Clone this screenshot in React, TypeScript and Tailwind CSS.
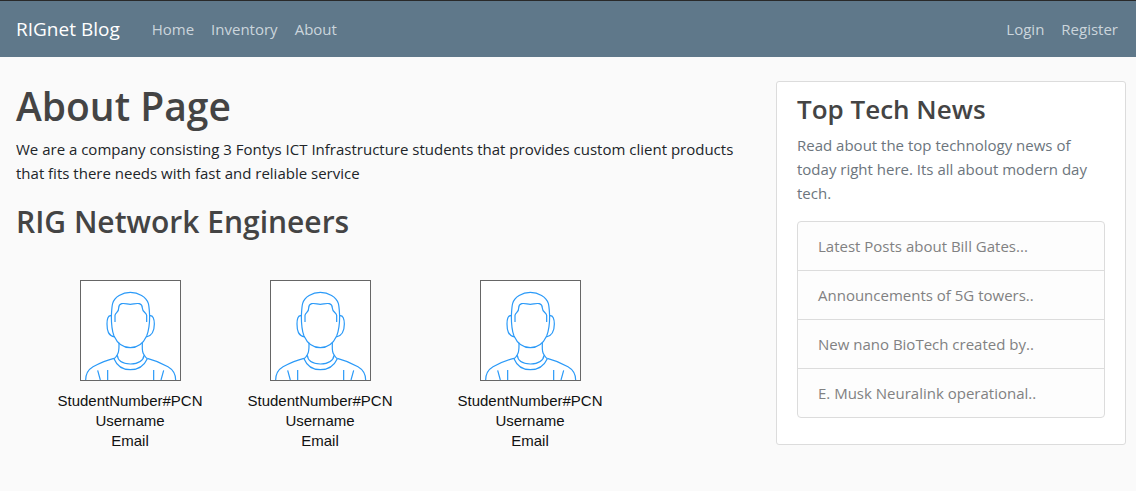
const primaryLinks = ["Home", "Inventory", "About"];
const accountLinks = ["Login", "Register"];
const engineers = [1, 2, 3];
const news = [
  "Latest Posts about Bill Gates...",
  "Announcements of 5G towers..",
  "New nano BioTech created by..",
  "E. Musk Neuralink operational..",
];

function NavLinks({ items }: { items: string[] }) {
  return (
    <ul className="flex gap-[17px]">
      {items.map((item) => (
        <li key={item}>
          <a href="#" className="text-[#cbd5dc] hover:text-white">
            {item}
          </a>
        </li>
      ))}
    </ul>
  );
}

function Avatar() {
  return (
    <svg viewBox="0 0 303 303" className="size-[101px]" fill="none" stroke="#2b9af8" strokeWidth="3.6" aria-hidden="true">
      <rect x="1.5" y="1.5" width="300" height="300" fill="#fff" stroke="#666" strokeWidth="3" />
      {/* head, hair and ears */}
      <path d="M94 109 C95 95 95 81 98 70 C103 51 127 37 151 37 C175 37 199 51 205 70 C208 81 208 95 209 109" />
      <path d="M94 106 C94 132 95 151 102 168 C112 190 130 203 151 203 C172 203 190 190 200 168 C207 151 209 132 209 106" />
      <path d="M105 126 L105 106 C106 98 117 96 116 84 C116 77 119 73 125 71 C134 69 142 73 151 73 C160 73 168 69 178 71 C184 73 187 77 187 84 C187 96 199 98 200 106 L200 126" />
      <path d="M94 107 C84 105 81 117 81 132 C81 153 85 167 104 171 M209 107 C219 105 223 117 223 132 C223 153 218 167 199 171" />
      {/* neck and collar */}
      <path d="M117 188 C117 205 118 216 112 224 C109 230 106 233 102 236 M187 188 C187 205 185 216 192 224 C195 230 198 233 202 236" />
      <path d="M112 226 C113 243 129 251 151 252 C173 251 190 243 192 226" />
      <path d="M102 236 C111 258 127 269 151 269 C175 269 192 258 202 236" />
      {/* shoulders and sleeves */}
      <path d="M102 235 C86 239 58 250 39 260 C22 270 17 284 17 300 M202 235 C218 239 246 250 264 260 C281 270 287 284 287 300" />
      <path d="M53 271 L61 300 M83 270 L83 300 M221 270 L221 300 M251 271 L243 300" />
    </svg>
  );
}

export default function App() {
  return (
    <div className="min-h-screen bg-[#fafafa] font-['Open_Sans','Noto_Sans',sans-serif] text-[15px] leading-6 text-[#212529]">
      <header className="border-t border-[#292929] bg-[#5f788a]">
        <nav className="flex min-h-14 flex-wrap items-center gap-x-8 pr-[18px] pl-4">
          <a href="#" className="text-[19px] text-white">
            RIGnet Blog
          </a>
          <div className="flex grow flex-wrap justify-between gap-x-4">
            <NavLinks items={primaryLinks} />
            <NavLinks items={accountLinks} />
          </div>
        </nav>
      </header>

      <div className="flex flex-col gap-8 pt-6 pr-[10px] pb-6 pl-4 md:flex-row md:items-start">
        <main className="min-w-0 grow basis-0">
          <h1 className="mb-[6px] text-[39px] leading-[50px] font-semibold text-[#444]">About Page</h1>
          <p className="mb-4">
            We are a company consisting 3 Fontys ICT Infrastructure students that provides custom client products that
            fits there needs with fast and reliable service
          </p>
          <h2 className="text-[30px] leading-[42px] font-semibold text-[#444]">RIG Network Engineers</h2>
          <div className="mt-[37px] flex flex-wrap gap-y-6 pl-[19px] lg:grid lg:grid-cols-[190px_190px_230px]">
            {engineers.map((id) => (
              <figure key={id} className="flex flex-col items-center gap-[10px]">
                <Avatar />
                <figcaption className="text-center font-['Liberation_Sans',sans-serif] leading-5 text-[#111]">
                  <div>StudentNumber#PCN</div>
                  <div>Username</div>
                  <div>Email</div>
                </figcaption>
              </figure>
            ))}
          </div>
        </main>

        <aside className="rounded-[3px] border border-[#dcdcdc] bg-white px-5 pt-[11px] pb-[26px] md:w-[350px] md:shrink-0">
          <h3 className="mb-2 text-[26px] leading-8 font-semibold text-[#444]">Top Tech News</h3>
          <p className="mb-4 text-[#6c757d]">
            Read about the top technology news of today right here. Its all about modern day tech.
          </p>
          <ul className="divide-y divide-[#dcdcdc] rounded border border-[#dcdcdc] bg-[#fdfdfd] text-[#818182]">
            {news.map((item) => (
              <li key={item} className="px-5 py-3">
                {item}
              </li>
            ))}
          </ul>
        </aside>
      </div>
    </div>
  );
}
